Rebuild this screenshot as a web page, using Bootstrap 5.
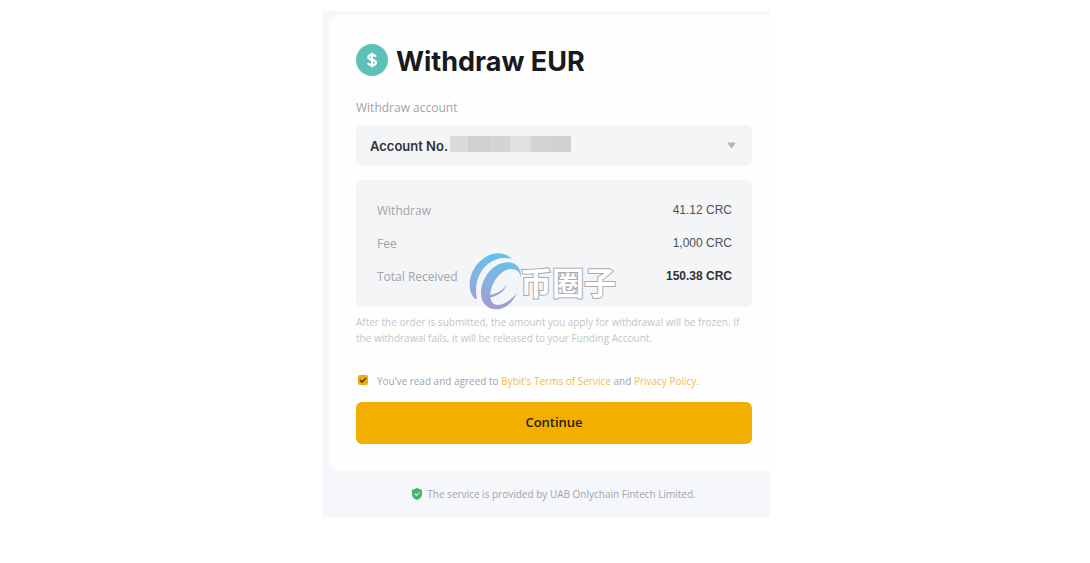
<!DOCTYPE html>
<html lang="en">
<head>
<meta charset="utf-8">
<meta name="viewport" content="width=device-width, initial-scale=1">
<title>Withdraw EUR</title>
<link href="https://cdn.jsdelivr.net/npm/bootstrap@5.3.0/dist/css/bootstrap.min.css" rel="stylesheet">
<style>
  body { padding-left: 2px; font-family: "Open Sans", "Noto Sans", sans-serif; font-size: 12px; line-height: 16px; color: #a2a4a8; background: #fff; }
  .panel { max-width: 448px; margin-top: 11px; padding: 4px 0 0 7px; background: #f6f7fb; }
  .sheet { padding: 29px 18px 27px 27px; background: #fefefe; border-radius: 10px 0 0 10px; }
  .title { font-family: Inter, sans-serif; font-size: 27px; line-height: 36px; font-weight: 700; color: #18191b; }
  .coin { width: 32px; height: 32px; }
  .field-label { margin: 20px 0 9px; }
  .account { height: 41px; padding: 0 14px; border: 0; border-radius: 6px; background: #f4f5f7; appearance: none; color: #303236; font-family: Inter, sans-serif; font-size: 13px; font-weight: 600; }
  .redacted { left: 94px; top: 11px; width: 121px; height: 16px; pointer-events: none;
    background: linear-gradient(90deg, #d9dadb 0 18px, #cfd0d1 18px 40px, #d3d4d5 40px 60px, #dfe0e1 60px 81px, #d3d4d5 81px 102px, #cfd0d1 102px); }
  .arrow { right: 16px; top: 17px; width: 9px; height: 7px; pointer-events: none; }
  .summary { margin-top: 14px; padding: 22px 20px 22px 21px; border-radius: 6px; background: #f4f5f7; line-height: 17px; }
  .summary dl { gap: 16px; }
  .summary dt { font-weight: 400; }
  .summary dd { font-family: "Liberation Sans", sans-serif; color: #4f5155; font-weight: 400; }
  .summary .total { color: #303236; font-weight: 700; }
  .brand { left: 113px; top: 71px; }
  .brand svg { width: 54px; height: 60px; }
  .brand span { margin-left: -3px; font: 700 32px/38px "Noto Sans CJK SC", sans-serif; color: #fff; -webkit-text-stroke: 2px #a9aaad; paint-order: stroke fill; }
  .note { margin: 7px 0 27px; font-size: 10px; color: #c4c5c8; }
  .terms { gap: 9px; margin: 0 0 13px 2px; font-size: 10px; }
  .terms a { color: #f3bd43; text-decoration: none; }
  .agree { width: 10px; height: 10px; border: 0; border-radius: 2px; appearance: none; margin-top: 2px;
    background: #f0ac0c url("data:image/svg+xml,%3Csvg xmlns='http://www.w3.org/2000/svg' viewBox='0 0 10 10'%3E%3Cpath d='M2 5l2 2 4-4' fill='none' stroke='%23533c08' stroke-width='1.6'/%3E%3C/svg%3E"); }
  .continue, .continue:hover { height: 42px; border: 0; border-radius: 6px; background: #f3af00; color: #29200a; font-size: 13px; font-weight: 600; }
  .provider { gap: 5px; padding: 15px 0 15px 9px; font-size: 10px; }
  .provider svg { width: 10px; height: 12px; }
</style>
</head>
<body>
<div class="panel mx-auto">
  <main class="sheet">
    <div class="d-flex align-items-start gap-2">
      <svg class="coin" viewBox="0 0 32 32" aria-hidden="true">
        <circle cx="16" cy="16" r="16" fill="#5dc1b9"/>
        <path d="M20 12.700c-.8-1.100-2.200-1.800-4-1.800-2.200 0-3.700.9-3.700 2.400 0 3.600 7.700 1.600 7.700 5.300 0 1.600-1.600 2.600-4 2.600-2 0-3.500-.7-4.400-2M16 8.700v14.600" fill="none" stroke="#fff" stroke-width="2.200"/>
      </svg>
      <h1 class="title m-0">Withdraw EUR</h1>
    </div>
    <label class="field-label d-block" for="account">Withdraw account</label>
    <div class="position-relative">
      <select class="account w-100 d-block" id="account"><option>Account No.</option></select>
      <span class="redacted position-absolute"></span>
      <svg class="arrow position-absolute" viewBox="0 0 9 7" aria-hidden="true"><path d="M1 1h7L4.500 6z" fill="#b1b3b7" stroke="#b1b3b7" stroke-linejoin="round"/></svg>
    </div>
    <section class="summary position-relative">
      <dl class="d-flex flex-column m-0">
        <div class="d-flex justify-content-between"><dt>Withdraw</dt><dd class="m-0">41.12 CRC</dd></div>
        <div class="d-flex justify-content-between"><dt>Fee</dt><dd class="m-0">1,000 CRC</dd></div>
        <div class="d-flex justify-content-between"><dt>Total Received</dt><dd class="total m-0">150.38 CRC</dd></div>
      </dl>
      <div class="brand position-absolute d-flex align-items-center text-nowrap" lang="zh">
        <svg viewBox="0 0 54 60" aria-hidden="true">
          <defs><linearGradient id="swirl" gradientUnits="userSpaceOnUse" x1="30" y1="2" x2="22" y2="59"><stop offset="0" stop-color="#5fc3ef"/><stop offset=".45" stop-color="#82b4e2"/><stop offset="1" stop-color="#a19bce"/></linearGradient></defs>
          <path fill="url(#swirl)" d="M43 8C36 1 25 0 15 7C3 15-3 32 3 44C5 47 6 48 8 48C5 35 9 21 19 13C27 7 35 6 43 8Z"/>
          <path fill="url(#swirl)" d="M52 27C53 16 45 9 34 12C22 14 12 29 12 42C12 53 20 60 31 58C39 56 45 49 48 42C42 49 35 54 29 54C22 54 20 47 22 39C25 27 34 18 42 18C48 18 51 21 52 27Z"/>
          <path fill="url(#swirl)" d="M20 47C29 45 36 40 38 33C35 38 29 43 20 44Z"/>
        </svg>
        <span>币圈子</span>
      </div>
    </section>
    <p class="note">After the order is submitted, the amount you apply for withdrawal will be frozen. If the withdrawal fails, it will be released to your Funding Account.</p>
    <div class="terms d-flex align-items-start">
      <input class="agree flex-shrink-0" type="checkbox" id="agree" checked>
      <label for="agree">You’ve read and agreed to <a href="#terms">Bybit’s Terms of Service</a> and <a href="#privacy">Privacy Policy</a>.</label>
    </div>
    <button class="continue btn w-100 d-block p-0" type="button">Continue</button>
  </main>
  <footer class="provider d-flex justify-content-center align-items-center">
    <svg viewBox="0 0 10 12" aria-hidden="true"><path d="M5 0l5 2v4c0 3-2 5-5 6-3-1-5-3-5-6V2z" fill="#48b36b"/><path d="M2.500 5.500l2 2 3-3" fill="none" stroke="#bfe5cc" stroke-width="1.200"/></svg>
    <span>The service is provided by UAB Onlychain Fintech Limited.</span>
  </footer>
</div>
<script src="https://cdn.jsdelivr.net/npm/bootstrap@5.3.0/dist/js/bootstrap.bundle.min.js"></script>
</body>
</html>
